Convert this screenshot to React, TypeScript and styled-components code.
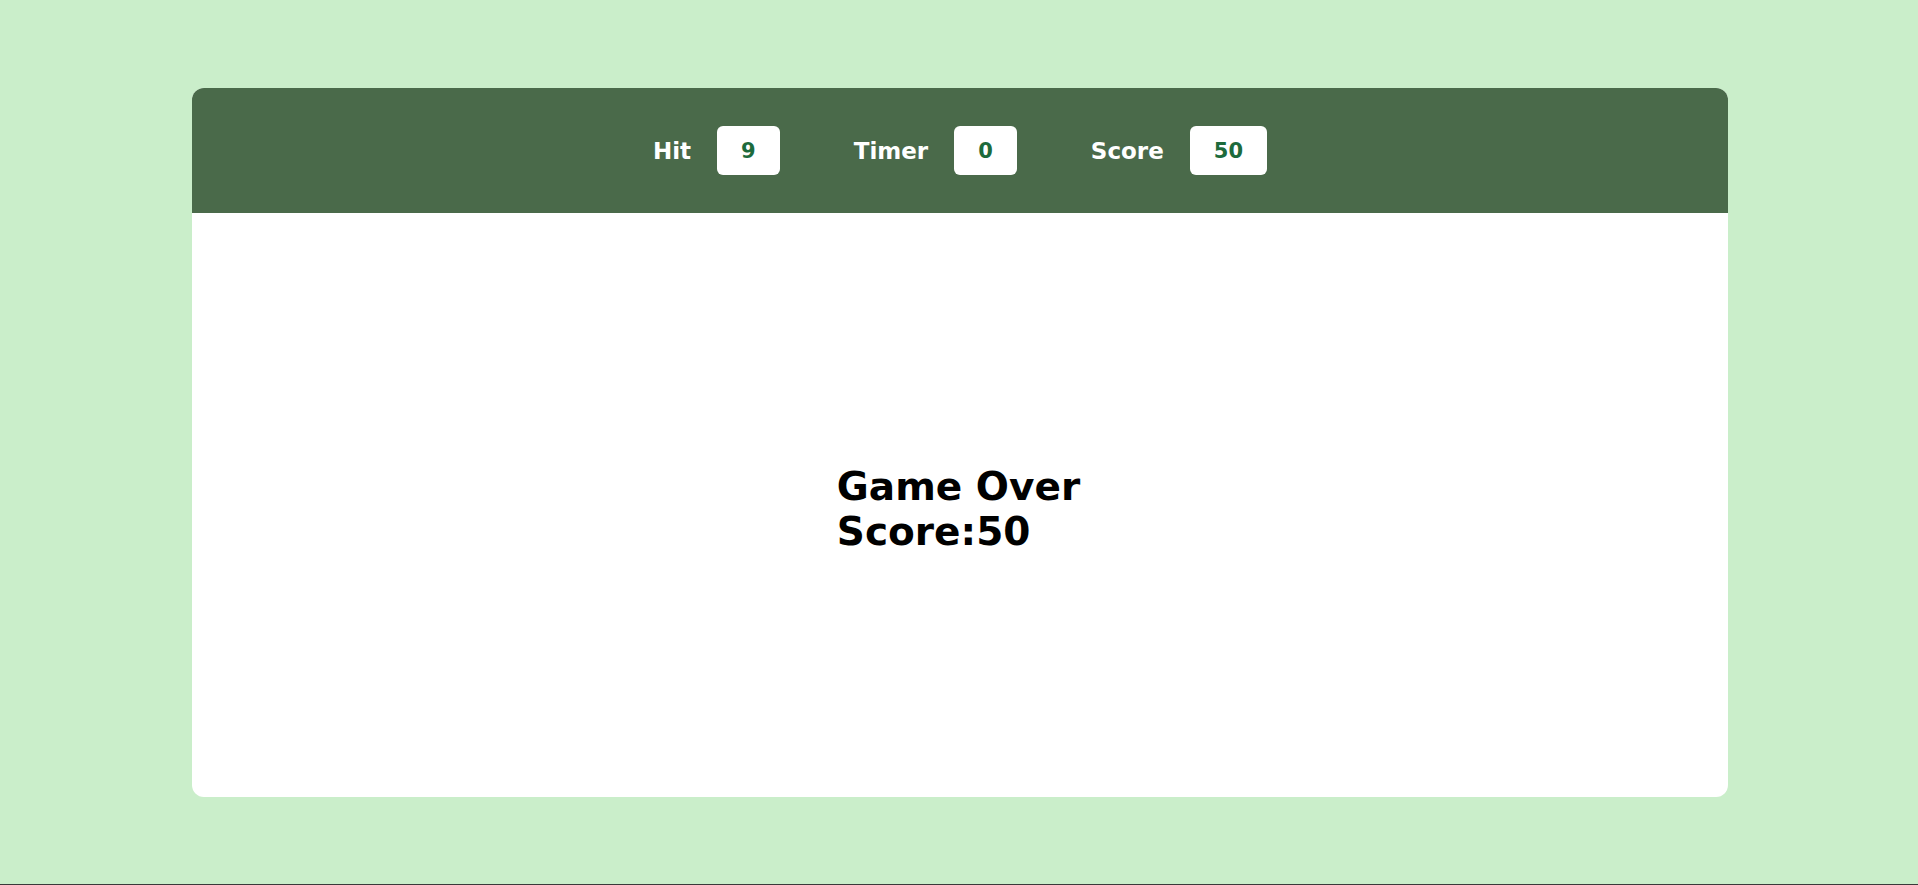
import React from "react";
import styled, { createGlobalStyle } from "styled-components";

const GlobalStyle = createGlobalStyle`
  html, body {
    margin: 0;
    padding: 0;
    background: #caeeca;
    font-family: "DejaVu Sans", Verdana, sans-serif;
  }
`;

const Page = styled.div`
  min-height: 100vh;
  box-sizing: border-box;
  padding-top: 88px;
  border-bottom: 1px solid #3a3a3a;
  background: #caeeca;
`;

const Panel = styled.div`
  width: 1536px;
  height: 709px;
  margin: 0 0 0 192px;
  background: #ffffff;
  border-radius: 12px;
  overflow: hidden;
  display: flex;
  flex-direction: column;
`;

const Header = styled.header`
  height: 125px;
  flex: none;
  background: #4a6a4a;
  display: flex;
  align-items: center;
  justify-content: center;
  gap: 74px;
  box-sizing: border-box;
`;

const Stat = styled.div`
  display: flex;
  align-items: center;
  gap: 26px;
`;

const Label = styled.span`
  color: #ffffff;
  font-weight: bold;
  font-size: 23px;
`;

const Value = styled.span`
  height: 49px;
  box-sizing: border-box;
  padding: 0 24px;
  background: #ffffff;
  border-radius: 6px;
  display: flex;
  align-items: center;
  justify-content: center;
  color: #1d6b3c;
  font-weight: bold;
  font-size: 21px;
`;

const Board = styled.main`
  flex: 1;
  display: flex;
  align-items: center;
  justify-content: center;
  padding-top: 7px;
`;

const Result = styled.div`
  font-weight: bold;
  font-size: 39px;
  line-height: 45px;
  color: #000;
  text-align: left;
  margin-left: -3px;
`;

export default function App() {
  return (
    <>
      <GlobalStyle />
      <Page>
        <Panel>
          <Header>
            <Stat>
              <Label>Hit</Label>
              <Value>9</Value>
            </Stat>
            <Stat>
              <Label>Timer</Label>
              <Value>0</Value>
            </Stat>
            <Stat>
              <Label>Score</Label>
              <Value>50</Value>
            </Stat>
          </Header>
          <Board>
            <Result>
              Game Over
              <br />
              Score:50
            </Result>
          </Board>
        </Panel>
      </Page>
    </>
  );
}
